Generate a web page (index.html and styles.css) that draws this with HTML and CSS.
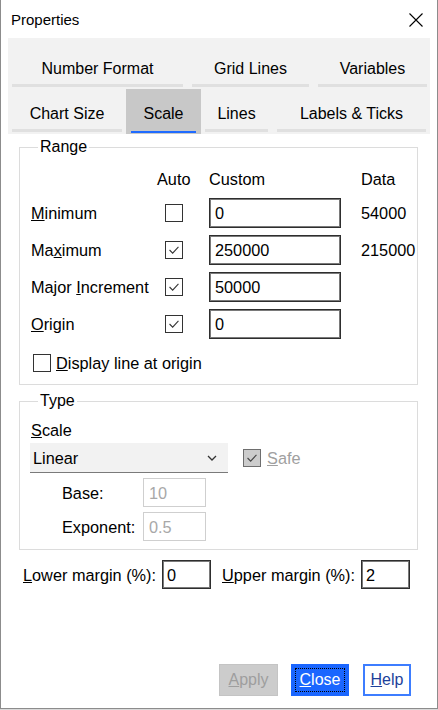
FILE: index.html
```html
<!DOCTYPE html>
<html>
<head>
<meta charset="utf-8">
<title>Properties</title>
<link rel="stylesheet" href="styles.css">
</head>
<body>
<div class="window">
  <div class="titlebar">
    <span class="title">Properties</span>
    <svg class="close-x" width="14" height="14" viewBox="0 0 14 14"><path d="M0.5 0.5 L13.5 13.5 M13.5 0.5 L0.5 13.5" stroke="#000" stroke-width="1.1" fill="none"/></svg>
  </div>

  <div class="tabs">
    <div class="tabrow row1">
      <div class="tab w171"><span class="tab-label">Number Format</span><span class="tab-bar"></span></div>
      <div class="tab w117"><span class="tab-label">Grid Lines</span><span class="tab-bar"></span></div>
      <div class="tab w109"><span class="tab-label">Variables</span><span class="tab-bar"></span></div>
    </div>
    <div class="tabrow row2">
      <div class="tab w110"><span class="tab-label">Chart Size</span><span class="tab-bar"></span></div>
      <div class="tab selected"><span class="tab-label">Scale</span><span class="tab-bar"></span></div>
      <div class="tab w63"><span class="tab-label">Lines</span><span class="tab-bar"></span></div>
      <div class="tab w149"><span class="tab-label">Labels &amp; Ticks</span><span class="tab-bar"></span></div>
    </div>
  </div>

  <fieldset class="group range">
    <legend>Range</legend>
    <div class="range-grid">
      <span></span><span class="hdr">Auto</span><span class="hdr">Custom</span><span class="hdr">Data</span>

      <span class="rlabel"><u>M</u>inimum</span>
      <span class="cb"></span>
      <span class="field">0</span>
      <span class="data">54000</span>

      <span class="rlabel">Ma<u>x</u>imum</span>
      <span class="cb"><svg viewBox="0 0 18 18"><path d="M4 9 L7.5 12.5 L14 5.5" stroke="#333" stroke-width="1.2" fill="none"/></svg></span>
      <span class="field">250000</span>
      <span class="data">215000</span>

      <span class="rlabel">Major <u>I</u>ncrement</span>
      <span class="cb"><svg viewBox="0 0 18 18"><path d="M4 9 L7.5 12.5 L14 5.5" stroke="#333" stroke-width="1.2" fill="none"/></svg></span>
      <span class="field">50000</span>
      <span></span>

      <span class="rlabel"><u>O</u>rigin</span>
      <span class="cb"><svg viewBox="0 0 18 18"><path d="M4 9 L7.5 12.5 L14 5.5" stroke="#333" stroke-width="1.2" fill="none"/></svg></span>
      <span class="field">0</span>
      <span></span>
    </div>
    <div class="origin-line">
      <span class="cb"></span>
      <span><u>D</u>isplay line at origin</span>
    </div>
  </fieldset>

  <fieldset class="group type">
    <legend>Type</legend>
    <div class="scale-label"><u>S</u>cale</div>
    <div class="scale-row">
      <div class="dropdown">
        <span>Linear</span>
        <svg width="10" height="6" viewBox="0 0 10 6"><path d="M1 1 L5 5 L9 1" stroke="#333" stroke-width="1.3" fill="none"/></svg>
      </div>
      <span class="cb disabled"><svg viewBox="0 0 18 18"><path d="M4 9 L7.5 12.5 L14 5.5" stroke="#444" stroke-width="1.3" fill="none"/></svg></span>
      <span class="safe-text"><u>S</u>afe</span>
    </div>
    <div class="param-row">
      <span class="plabel">Base:</span>
      <span class="field small disabled">10</span>
    </div>
    <div class="param-row">
      <span class="plabel">Exponent:</span>
      <span class="field small disabled">0.5</span>
    </div>
  </fieldset>

  <div class="margins">
    <span><u>L</u>ower margin (%):</span>
    <span class="field margin">0</span>
    <span class="upper"><u>U</u>pper margin (%):</span>
    <span class="field margin">2</span>
  </div>

  <div class="buttons">
    <span class="btn apply"><u>A</u>pply</span>
    <span class="btn close"><span class="focus"><u>C</u>lose</span></span>
    <span class="btn help"><u>H</u>elp</span>
  </div>
</div>
</body>
</html>
```

FILE: styles.css
```css
* { box-sizing: border-box; }

html, body {
  margin: 0;
  padding: 0;
}

body {
  width: 438px;
  height: 710px;
  background: #d9d9d9;
  font-family: "Liberation Sans", Arial, sans-serif;
  font-size: 16.3px;
  line-height: 18px;
  color: #000;
}

.window {
  width: 438px;
  height: 709px;
  background: #fff;
  border-left: 1px solid #8c8c8c;
  border-right: 1px solid #8c8c8c;
  border-bottom: 1px solid #8c8c8c;
  display: flex;
  flex-direction: column;
}

.titlebar {
  height: 38px;
  display: flex;
  align-items: center;
  justify-content: space-between;
  padding: 1px 14px 0 10px;
}

.title {
  font-size: 15px;
}

.close-x {
  display: block;
}

/* Tabs */
.tabs {
  margin: 0 7px;
  background: #f2f2f2;
  padding: 0 3px 0 4px;
  height: 96px;
}

.tabrow {
  display: flex;
  gap: 9px;
}

.row1 { height: 50px; }
.row2 { height: 45px; margin-top: 1px; }

.tab {
  display: flex;
  flex-direction: column;
  justify-content: flex-end;
  align-items: stretch;
  font-size: 16px;
}

.row1 .tab { padding-bottom: 1px; }
.row2 .tab { padding-bottom: 2px; }

.tab-label {
  line-height: 18px;
  text-align: center;
  margin-bottom: 6px;
  white-space: nowrap;
}

.tab-bar {
  height: 3px;
  background: #e0e0e0;
}

.w171 { width: 171px; }
.w117 { width: 117px; }
.w109 { width: 109px; }
.w110 { width: 110px; }
.w63 { width: 63px; }
.w149 { width: 149px; }

.tab.selected {
  width: 75px;
  margin: 0 -5px;
  background: #c8c8c8;
  padding-bottom: 1px;
}

.tab.selected .tab-label {
  margin-bottom: 8px;
}

.tab.selected .tab-bar {
  background: #1f6bff;
  margin: 0 5px;
  height: 2px;
}

/* Group boxes */
.group {
  margin: 4px 0 0 18px;
  width: 399px;
  border: 1px solid #dcdcdc;
  padding: 14px 0 12px 11px;
  min-width: 0;
}

.group legend {
  padding: 0 2px 0 2px;
  margin-left: 7px;
  line-height: 18px;
  font-size: 16px;
}

.range-grid {
  display: grid;
  grid-template-columns: 126px 52px 152px auto;
  grid-template-rows: 21px repeat(4, 30px);
  row-gap: 7px;
  align-items: center;
}

.hdr {
  align-self: start;
  line-height: 18px;
}

.rlabel {
  white-space: nowrap;
}

.cb {
  width: 18px;
  height: 18px;
  border: 1px solid #333;
  background: #fff;
  display: inline-block;
  flex: none;
}

.cb svg {
  display: block;
  width: 16px;
  height: 16px;
}

.range-grid .cb {
  margin-left: 8px;
}

.field {
  display: flex;
  align-items: center;
  width: 132px;
  height: 30px;
  border: 1px solid #2e2e2e;
  box-shadow: inset 0 0 0 1px #7a7a7a;
  padding-left: 5px;
  background: #fff;
}

.origin-line {
  display: flex;
  align-items: center;
  gap: 5px;
  margin: 15px 0 0 2px;
  height: 18px;
}

/* Type group */
.type {
  margin-top: 7px;
  padding: 11px 0 8px 11px;
}

.scale-label {
  line-height: 18px;
}

.scale-row {
  display: flex;
  align-items: center;
  margin-top: 4px;
  margin-left: -1px;
}

.dropdown {
  width: 198px;
  height: 30px;
  background: #f2f2f2;
  border-bottom: 1px solid #7a7a7a;
  display: flex;
  align-items: center;
  justify-content: space-between;
  padding: 0 11px 0 3px;
}

.dropdown svg { display: block; }

.cb.disabled {
  margin-left: 15px;
  background: #cccccc;
  border-color: #6e6e6e;
}

.safe-text {
  margin-left: 6px;
  color: #a0a0a0;
}

.param-row {
  display: flex;
  align-items: center;
  margin-left: 31px;
  margin-top: 5px;
}

.scale-row + .param-row { margin-top: 5px; }

.plabel {
  width: 81px;
}

.field.small {
  width: 63px;
  height: 29px;
}

.field.disabled {
  border-color: #cfcfcf;
  box-shadow: none;
  color: #a8a8a8;
}

/* Margins */
.margins {
  display: flex;
  align-items: center;
  margin: 10px 0 0 22px;
}

.margins .field.margin {
  width: 49px;
  height: 29px;
  margin-left: 6px;
  padding-left: 4px;
}

.margins .upper {
  margin-left: 11px;
}

/* Buttons */
.buttons {
  margin-top: auto;
  margin-bottom: 12px;
  margin-right: 26px;
  display: flex;
  justify-content: flex-end;
}

.btn {
  height: 32px;
  display: flex;
  align-items: center;
  justify-content: center;
  font-size: 16px;
}

.btn.apply {
  width: 59px;
  background: #cccccc;
  border: 1px solid #c4c4c4;
  color: #9e9e9e;
}

.btn.close {
  width: 58px;
  margin-left: 13px;
  background: #1a66ff;
  color: #fff;
  border: 1px solid #1a66ff;
  padding: 3px;
}

.btn.close .focus {
  width: 100%;
  height: 100%;
  display: flex;
  align-items: center;
  justify-content: center;
  border: 1px dotted #000;
}

.btn.help {
  width: 48px;
  margin-left: 14px;
  background: #fff;
  border: 2px solid #3d7dff;
  color: #1d3f9a;
}
```
